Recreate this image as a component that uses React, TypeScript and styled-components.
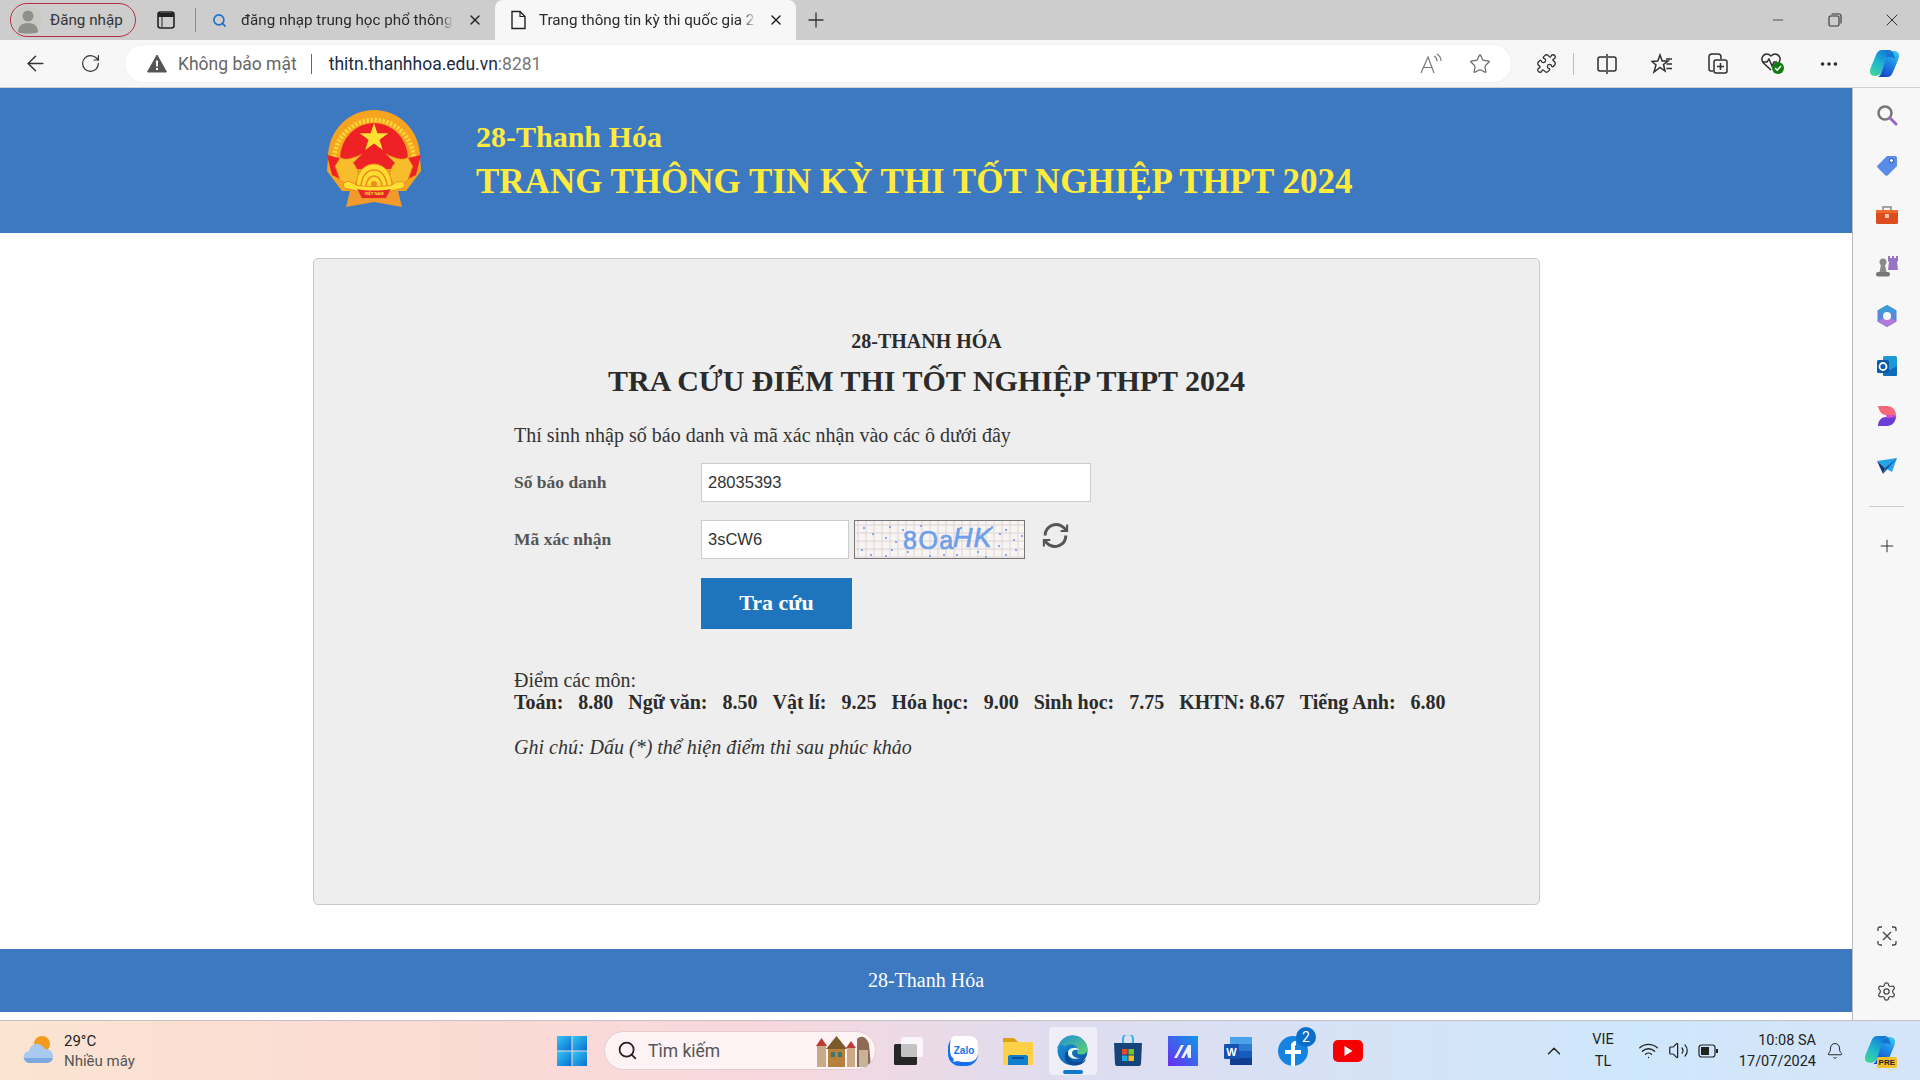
import React from "react";
import styled, { createGlobalStyle } from "styled-components";
import { ArrowLeft, RotateCw, Star, Puzzle, Plus, X, Minus, Search, Settings, MoreHorizontal, Bell, ChevronUp, Wifi, Volume2 } from "lucide-react";

const Global = createGlobalStyle`
  html, body { margin: 0; padding: 0; overflow: hidden; background: #fff; }
  * { box-sizing: border-box; }
`;
const Page = styled.div`
  width: 1920px; height: 1080px; display: flex; flex-direction: column; overflow: hidden;
  font-family: "Liberation Serif", serif; color: #333;
`;
const uiFont = `Roboto, "Noto Sans", sans-serif`;

/* ---------- browser chrome ---------- */
const TabStrip = styled.div`
  height: 40px; background: #cdcdcd; display: flex; align-items: center; flex: none;
  font-family: ${uiFont}; font-size: 15.2px; color: #222;
`;
const SignIn = styled.div`
  margin-left: 10px; width: 126px; height: 34px; border: 1.5px solid #b3303c; border-radius: 17px;
  display: flex; align-items: center; gap: 9px; padding-left: 4px; font-size: 15.2px; color: #333;
`;
const Avatar = styled.svg` width: 26px; height: 28px; flex: none; `;
const TabAction = styled.div` width: 30px; height: 30px; margin-left: 15px; display: flex; align-items: center; justify-content: center; `;
const StripDivider = styled.div` width: 1px; height: 24px; background: #8a8a8a; margin: 0 8px 0 14px; `;
const Tab = styled.div<{ $active?: boolean }>`
  width: ${p => (p.$active ? 301 : 291)}px; height: ${p => (p.$active ? 40 : 34)}px;
  align-self: flex-end; display: flex; align-items: center; gap: ${p => (p.$active ? 12 : 14)}px; padding: 0 12px 0 ${p => (p.$active ? 14 : 8)}px;
  background: ${p => (p.$active ? "#f7f7f7" : "transparent")};
  border-radius: ${p => (p.$active ? "8px 8px 0 0" : "0")};
  margin-bottom: ${p => (p.$active ? 0 : 3)}px;
`;
const TabTitle = styled.span`
  flex: 1; min-width: 0; white-space: nowrap; color: #2a2a2a;
  -webkit-mask-image: linear-gradient(90deg, #000 94%, transparent);
  mask-image: linear-gradient(90deg, #000 94%, transparent);
`;
const NewTab = styled.div` margin-left: 7px; width: 26px; height: 26px; display: flex; align-items: center; justify-content: center; `;
const WindowControls = styled.div` margin-left: auto; display: flex; align-items: center; gap: 37px; padding-right: 18px; `;
const Ctl = styled.div` width: 20px; height: 20px; display: flex; align-items: center; justify-content: center; `;

const Toolbar = styled.div`
  height: 48px; background: #f7f7f7; display: flex; align-items: center; flex: none;
  font-family: ${uiFont}; border-bottom: 1px solid #cfd4da;
`;
const NavBtn = styled.div<{ $ml: number }>` margin-left: ${p => p.$ml}px; width: 26px; height: 26px; display: flex; align-items: center; justify-content: center; `;
const AddressBar = styled.div`
  margin-left: 22px; width: 1386px; height: 37px; background: #fff; border-radius: 18px;
  display: flex; align-items: center; padding-left: 22px; font-size: 18px; box-shadow: 0 0 2px #e2e2e2;
`;
const Insecure = styled.span` color: #666; margin-left: 11px; font-size: 17.5px; `;
const BarDivider = styled.span` width: 1px; height: 20px; background: #666; margin: 0 17px 0 14px; `;
const Host = styled.span` color: #1c2b3f; font-size: 17.5px; `;
const Port = styled.span` color: #777; font-size: 17.5px; `;
const BarEnd = styled.div` margin-left: auto; display: flex; align-items: center; gap: 26px; padding-right: 20px; `;
const TbIcons = styled.div` display: flex; align-items: center; margin-left: 23px; `;
const TbIcon = styled.div<{ $w?: number }>` width: ${p => p.$w ?? 55.5}px; height: 30px; display: flex; align-items: center; justify-content: center; `;
const TbDivider = styled.div` width: 1px; height: 22px; background: #bdbdbd; margin: 0 5px 0 15px; `;

/* ---------- page ---------- */
const BodyRow = styled.div` flex: 1; min-height: 0; display: flex; `;
const Main = styled.main` width: 1852px; display: flex; flex-direction: column; background: #fff; `;
const Header = styled.header`
  height: 145px; background: #3d79c1; display: flex; align-items: flex-start; padding: 21px 0 0 326px; gap: 54px; flex: none;
`;
const HeaderText = styled.div` padding-top: 11px; color: #ffeb3b; font-weight: bold; `;
const HeaderTop = styled.div` font-size: 30px; line-height: 34px; `;
const HeaderMain = styled.div` font-size: 35px; line-height: 42px; margin-top: 7px; white-space: nowrap; `;
const Panel = styled.section`
  margin: 25px 0 0 313px; width: 1227px; height: 647px; background: #eee; border: 1px solid #c8c8c8; border-radius: 5px;
  padding: 70px 0 0 200px; flex: none;
`;
const PanelHead = styled.div` margin-left: -200px; text-align: center; font-weight: bold; color: #2b2b2b; `;
const PanelSub = styled.div` font-size: 20px; line-height: 24px; `;
const PanelTitle = styled.div` font-size: 30px; line-height: 36px; margin-top: 10px; `;
const Intro = styled.p` margin: 23.5px 0 0; font-size: 20px; line-height: 24px; color: #333; `;
const FormRow = styled.div<{ $mt: number }>` display: flex; align-items: center; margin-top: ${p => p.$mt}px; height: 39px; `;
const Label = styled.label` width: 187px; font-weight: bold; font-size: 17.5px; color: #555; flex: none; `;
const Input = styled.input<{ $w: number }>`
  width: ${p => p.$w}px; height: 39px; border: 1px solid #ccc; background: #fff; padding: 0 6px;
  font: 16.5px "Liberation Sans", Arial, sans-serif; color: #333; outline: none;
`;
const Captcha = styled.svg` margin-left: 5px; width: 171px; height: 39px; flex: none; border: 1px solid #777; `;
const Refresh = styled.svg` margin-left: 15px; width: 31px; height: 31px; flex: none; margin-top: -9px; `;
const SubmitBtn = styled.button`
  display: block; margin: 19px 0 0 187px; width: 151px; height: 51px; border: 0; background: #1f75bd; color: #fff;
  padding: 0 0 2px; font: bold 22px "Liberation Serif", serif;
`;
const ScoreTitle = styled.div` margin-top: 40px; font-size: 20px; line-height: 22px; color: #333; `;
const Scores = styled.div` font-size: 20px; line-height: 22px; font-weight: bold; color: #2b2b2b; display: flex; gap: 15px; white-space: nowrap; `;
const Score = styled.span<{ $tight?: boolean }>` display: inline-flex; gap: ${p => (p.$tight ? 5 : 15)}px; `;
const Note = styled.div` margin-top: 23px; font-size: 20px; line-height: 22px; font-style: italic; color: #333; `;
const Footer = styled.footer`
  margin-top: 44px; height: 63px; background: #3d79c1; color: #fff; font-size: 20px;
  display: flex; align-items: center; justify-content: center; flex: none;
`;

const Sidebar = styled.aside`
  width: 68px; background: #f7f7f7; border-left: 1px solid #bcbcbc; display: flex; flex-direction: column; align-items: center;
  padding-top: 2px;
`;
const SideIcon = styled.div` width: 30px; height: 50.2px; display: flex; align-items: center; justify-content: center; flex: none; `;
const SideRule = styled.div` width: 35px; height: 1px; background: #ccc; margin: 14px 0 14px; flex: none; `;
const SideBottom = styled.div` margin-top: auto; display: flex; flex-direction: column; align-items: center; padding-bottom: 3px; gap: 6px; `;

/* ---------- taskbar ---------- */
const Taskbar = styled.div`
  height: 60px; flex: none; display: flex; align-items: center; border-top: 1px solid #c4c0c4;
  background: linear-gradient(90deg, #fbe4d2 0%, #fbdad4 25%, #f8d8de 40%, #dfdcef 55%, #d6e2f6 70%, #cfe7fb 85%, #d6e4f8 100%);
  font-family: ${uiFont}; color: #222;
`;
const Weather = styled.div` margin-left: 22px; width: 42px; height: 34px; flex: none; display: flex; `;
const WeatherText = styled.div` font-size: 15px; line-height: 20px; width: 120px; `;
const WeatherSub = styled.div` color: #555; `;
const WinLogo = styled.svg` margin-left: 373px; width: 30px; height: 30px; flex: none; `;
const SearchBox = styled.div`
  margin-left: 17px; width: 272px; height: 39px; border-radius: 20px; background: #fdf3f5; border: 1px solid #e4ccd3;
  display: flex; align-items: center; padding-left: 12px; gap: 10px; font-size: 17.5px; color: #555; flex: none; position: relative; overflow: hidden;
`;
const TownPic = styled.svg` position: absolute; right: 2px; bottom: 1px; width: 60px; height: 34px; `;
const Apps = styled.div` display: flex; align-items: center; margin-left: 4px; flex: none; `;
const App_ = styled.div<{ $active?: boolean }>`
  width: ${p => (p.$active ? 48 : 55)}px; margin: 0 ${p => (p.$active ? 3.5 : 0)}px; height: 48px;
  display: flex; align-items: center; justify-content: center; position: relative; border-radius: 4px;
  background: ${p => (p.$active ? "rgba(255,255,255,.5)" : "transparent")};
`;
const ActiveBar = styled.div` position: absolute; bottom: 1px; left: 14px; width: 20px; height: 4px; border-radius: 2px; background: #0b78d0; `;
const Badge = styled.div`
  position: absolute; top: 0; right: 4px; width: 20px; height: 20px; border-radius: 50%; background: #0b6ec9; color: #fff;
  font-size: 14px; display: flex; align-items: center; justify-content: center;
`;
const Tray = styled.div` margin-left: auto; display: flex; align-items: center; padding-right: 22px; `;
const Lang = styled.div` width: 50px; margin-left: 13px; text-align: center; font-size: 14.5px; line-height: 22px; `;
const TrayIcons = styled.div` display: flex; align-items: center; gap: 9px; margin-left: 10px; `;
const Clock = styled.div` width: 88px; margin-left: 10px; text-align: right; font-size: 14.5px; line-height: 21px; `;
const BellWrap = styled.div` margin: 0 0 0 10px; width: 18px; display: flex; `;
const CopilotPre = styled.div` margin-left: 20px; width: 34px; height: 34px; position: relative; `;
const PreTag = styled.span`
  position: absolute; right: 1px; bottom: 0; background: #f3c02b; color: #222; font: bold 8px "Liberation Sans", sans-serif;
  padding: 1px 2px; border-radius: 2px;
`;

/* ---------- drawings ---------- */
const Copilot = ({ s = 31, id }: { s?: number; id: string }) => (
  <svg width={s} height={s} viewBox="0 0 31 29">
    <defs>
      <linearGradient id={`${id}a`} x1="0.7" y1="0" x2="0.2" y2="1"><stop offset="0" stopColor="#0f7bd8" /><stop offset=".55" stopColor="#22b8cf" /><stop offset="1" stopColor="#3ed59a" /></linearGradient>
      <linearGradient id={`${id}b`} x1="0.7" y1="0" x2="0.2" y2="1"><stop offset="0" stopColor="#1546c8" /><stop offset=".6" stopColor="#1e8fe6" /><stop offset="1" stopColor="#36c4ee" /></linearGradient>
    </defs>
    <path d="M7 6C8 3 10 1 13 1h9c-2 1-3 3-4 6l-4 13c-1 4-3 6-7 7-3 0-6-1-6-4 0-1 0-3 1-5z" fill={`url(#${id}a)`} />
    <g transform="rotate(180 15.500 14.500)"><path d="M7 6C8 3 10 1 13 1h9c-2 1-3 3-4 6l-4 13c-1 4-3 6-7 7-3 0-6-1-6-4 0-1 0-3 1-5z" fill={`url(#${id}b)`} /></g>
    <path d="M13 1h7c3 0 4 2 5 5l1 4c-2-2-4-2-7-2h-2l1-2c.7-2 1-4 3-5z" fill="#0b5cc4" opacity=".7" />
  </svg>
);

const Emblem = () => (
  <svg width="96" height="99" viewBox="0 0 96 99">
    <path d="M24 82L20 98l28-5 28 5-4-16z" fill="#f39a2d" />
    <path d="M2 48A46 47 0 0 1 94 48L95 62 80 82H16L1 62z" fill="#f6a41f" />
    <path d="M8 52A40 41 0 0 1 88 52" fill="none" stroke="#fdd53c" strokeWidth="4.500" strokeDasharray="2.400 1.600" />
    <path d="M14 50A34 36 0 0 1 82 50V60H14z" fill="#ee2124" />
    <path d="M1 46L26 52 32 64 22 74 6 66z" fill="#ee2124" />
    <path d="M95 46L70 52 64 64 74 74 90 66z" fill="#ee2124" />
    <polygon points="48,14 51.400,24.300 62.300,24.300 53.500,30.700 56.800,41 48,34.600 39.200,41 42.500,30.700 33.700,24.300 44.600,24.300" fill="#fde030" />
    <path d="M14 48c4 3 9 3 22-3l-9 9c3 3 6 8 5 14l-5 11-13-8-5-14c2-3 4-6 5-9z" fill="#f8bd2c" stroke="#e6761f" strokeWidth="1" strokeDasharray="1.600 1.200" />
    <path d="M82 48c-4 3-9 3-22-3l9 9c-3 3-6 8-5 14l5 11 13-8 5-14c-2-3-4-6-5-9z" fill="#f8bd2c" stroke="#e6761f" strokeWidth="1" strokeDasharray="1.600 1.200" />
    <path d="M30 78c0-14 8-23 18-23s18 9 18 23z" fill="#ffdc30" stroke="#f08a1d" strokeWidth="1" />
    <path d="M35 78c0-10 6-17 13-17s13 7 13 17" fill="none" stroke="#f08a1d" strokeWidth="1.500" />
    <path d="M40 78c0-6 3.500-11 8-11s8 5 8 11" fill="none" stroke="#f08a1d" strokeWidth="1.500" />
    <circle cx="48" cy="75" r="3" fill="#f08a1d" />
    <path d="M18 74c3-3 8-1 12 2 6 2 30 2 36 0 4-3 9-5 12-2 2 3-1 6-5 6l-8 2-5 7H36l-5-7-8-2c-4 0-7-3-5-6z" fill="#fde030" stroke="#e6761f" strokeWidth=".7" />
    <path d="M31 80c8 2 26 2 34 0l-5 9H36z" fill="#e8262a" />
    <text x="48" y="86" textAnchor="middle" fontSize="4" fontWeight="bold" fontFamily="Liberation Sans, sans-serif" fill="#fde030">VIỆT NAM</text>
  </svg>
);

const TownIcon = () => (
  <TownPic viewBox="0 0 60 34">
    <rect x="4" y="12" width="9" height="21" fill="#c8a988" /><path d="M3 12l5.500-8 5.500 8z" fill="#bd3b34" />
    <rect x="15" y="14" width="17" height="19" fill="#b8803d" /><path d="M13 15L23.500 2 34 15z" fill="#7a5a2a" />
    <rect x="18" y="18" width="4" height="5" fill="#39786f" /><rect x="25" y="18" width="4" height="5" fill="#39786f" />
    <rect x="34" y="14" width="8" height="19" fill="#cda986" /><path d="M33 14l5-7 5 7z" fill="#bd3b34" />
    <path d="M44 33V5c4-4 9-3 12 5l2 23z" fill="#8f6a52" /><rect x="46" y="16" width="9" height="17" fill="#c9b398" />
  </TownPic>
);

const CaptchaArt = () => {
  const dots = [[8,6],[17,12],[34,5],[36,28],[15,33],[30,34],[52,30],[65,4],[88,33],[105,6],[122,30],[136,5],[150,8],[158,18],[160,28],[150,33],[166,14],[6,28],[47,8],[74,34],[101,33],[130,35],[143,24],[30,16],[40,20],[144,12]];
  const h = Array.from({ length: 5 }, (_, i) => 4 + i * 8);
  const v = Array.from({ length: 22 }, (_, i) => 3 + i * 8);
  return (
    <Captcha viewBox="0 0 169 37">
      <rect width="169" height="37" fill="#f8f4f2" />
      {h.map(y => <line key={y} x1="0" x2="169" y1={y} y2={y} stroke="#dcd6d6" strokeWidth="1" />)}
      {v.map(x => <line key={x} y1="0" y2="37" x1={x} x2={x} stroke="#dcd6d6" strokeWidth="1" />)}
      {dots.map(([x, y]) => <rect key={`${x}-${y}`} x={x} y={y} width="2" height="2" fill="#84a8ec" />)}
      <text x="48" y="28" fontFamily="Liberation Sans, sans-serif" fontSize="25" fill="#6f9fe9" stroke="#6f9fe9" strokeWidth=".7" letterSpacing="1.500">8Oa</text>
      <text x="98" y="26" fontFamily="Liberation Sans, sans-serif" fontSize="27" fontStyle="italic" fill="#6f9fe9" stroke="#6f9fe9" strokeWidth=".6" letterSpacing="1">HK</text>
    </Captcha>
  );
};

const I = { stroke: "#2f2f2f", strokeWidth: 1.5 };

const scores: [string, string][] = [["Toán:", "8.80"], ["Ngữ văn:", "8.50"], ["Vật lí:", "9.25"], ["Hóa học:", "9.00"], ["Sinh học:", "7.75"], ["KHTN:", "8.67"], ["Tiếng Anh:", "6.80"]];

export default function App() {
  return (
    <Page>
      <Global />
      <TabStrip>
        <SignIn>
          <Avatar viewBox="0 0 26 28">
            <rect width="26" height="28" rx="13" fill="#c9c9c5" />
            <circle cx="13" cy="10" r="5.500" fill="#8f8f8b" />
            <path d="M3 26c0-6 4-9 10-9s10 3 10 9c-2 2-18 2-20 0z" fill="#8f8f8b" />
          </Avatar>
          Đăng nhập
        </SignIn>
        <TabAction>
          <svg width="20" height="20" viewBox="0 0 20 20" fill="none"><rect x="2" y="2" width="16" height="16" rx="2.500" stroke="#222" strokeWidth="1.600" /><path d="M2.500 3h15v4h-15z" fill="#222" /><path d="M6 7v10" stroke="#222" strokeWidth="1" /></svg>
        </TabAction>
        <StripDivider />
        <Tab>
          <Search size={15} color="#1a73c9" strokeWidth={2.600} />
          <TabTitle>đăng nhạp trung học phổ thông</TabTitle>
          <X size={16} color="#222" />
        </Tab>
        <Tab $active>
          <svg width="18" height="20" viewBox="0 0 18 20" fill="none"><path d="M3 1.500h8l5 5v12H3z" stroke="#222" strokeWidth="1.400" /><path d="M11 1.500v5h5" stroke="#222" strokeWidth="1.200" /></svg>
          <TabTitle>Trang thông tin kỳ thi quốc gia 2</TabTitle>
          <X size={16} color="#222" />
        </Tab>
        <NewTab><Plus size={24} color="#333" strokeWidth={1.300} /></NewTab>
        <WindowControls>
          <Ctl><Minus size={16} color="#333" strokeWidth={1.200} /></Ctl>
          <Ctl>
            <svg width="14" height="14" viewBox="0 0 14 14" fill="none" stroke="#333" strokeWidth="1.100"><rect x="1" y="3" width="10" height="10" rx="1.500" /><path d="M3.500 1H11c1.100 0 2 .9 2 2v7.500" /></svg>
          </Ctl>
          <Ctl><X size={20} color="#333" strokeWidth={1.200} /></Ctl>
        </WindowControls>
      </TabStrip>

      <Toolbar>
        <NavBtn $ml={22}><ArrowLeft size={25} color="#333" strokeWidth={1.400} /></NavBtn>
        <NavBtn $ml={29}><RotateCw size={21} color="#333" strokeWidth={1.400} /></NavBtn>
        <AddressBar>
          <svg width="20" height="19" viewBox="0 0 20 19"><path d="M10 1L19.500 18H.5z" fill="#555" stroke="#555" strokeLinejoin="round" /><rect x="9" y="6.500" width="2" height="6" fill="#fff" /><rect x="9" y="14" width="2" height="2" fill="#fff" /></svg>
          <Insecure>Không bảo mật</Insecure>
          <BarDivider />
          <Host>thitn.thanhhoa.edu.vn</Host><Port>:8281</Port>
          <BarEnd>
            <svg width="24" height="22" viewBox="0 0 24 22" fill="none" stroke="#777" strokeWidth="1.200"><path d="M2 20L9 4l6 16M4.500 14.500h9" /><path d="M15 3c2 1 3 3 3 5M18 1c3 2 4 4 4 7" /></svg>
            <Star size={22} color="#666" strokeWidth={1.300} />
          </BarEnd>
        </AddressBar>
        <TbIcons>
          <TbIcon $w={24}><Puzzle size={21} {...I} /></TbIcon>
          <TbDivider />
          <TbIcon>
            <svg width="22" height="20" viewBox="0 0 22 20" fill="none" {...I}><path d="M10 3H4a2 2 0 0 0-2 2v10a2 2 0 0 0 2 2h6M12 3h6a2 2 0 0 1 2 2v10a2 2 0 0 1-2 2h-6M11 0v20" /></svg>
          </TbIcon>
          <TbIcon>
            <svg width="22" height="22" viewBox="0 0 22 22" fill="none" {...I}><path d="M9 2l2.200 6H17l-4.500 3.500L14 18 9 14.500 3 19l2-7L1 8.500 6.800 8z" /><path d="M15 6h6M15.500 11h5.500M15.500 15.500h5.500" /></svg>
          </TbIcon>
          <TbIcon>
            <svg width="22" height="24" viewBox="0 0 22 24" fill="none" {...I}><path d="M6 19H4a2 2 0 0 1-2-2V5a3 3 0 0 1 3-3h6a3 3 0 0 1 3 3v2" /><rect x="7" y="8" width="13" height="13" rx="2" /><path d="M13.500 11v7M10 14.500h7" /></svg>
          </TbIcon>
          <TbIcon>
            <svg width="26" height="24" viewBox="0 0 26 24" fill="none" {...I}><path d="M11 18L3.500 11C0 7 3 2 7 2c2 0 3 1 4 2 1-1 2-2 4-2 4 0 7 5 3.500 9" /><path d="M2 10h5l2-3 3 7 2-4h3" /><circle cx="18" cy="16" r="6" fill="#107c10" stroke="none" /><path d="M15 16l2.200 2.200L21 14" stroke="#fff" strokeWidth="1.600" /></svg>
          </TbIcon>
          <TbIcon><MoreHorizontal size={22} {...I} strokeWidth={2} /></TbIcon>
          <TbIcon><Copilot id="cp1" /></TbIcon>
        </TbIcons>
      </Toolbar>

      <BodyRow>
        <Main>
          <Header>
            <Emblem />
            <HeaderText>
              <HeaderTop>28-Thanh Hóa</HeaderTop>
              <HeaderMain>TRANG THÔNG TIN KỲ THI TỐT NGHIỆP THPT 2024</HeaderMain>
            </HeaderText>
          </Header>
          <Panel>
            <PanelHead>
              <PanelSub>28-THANH HÓA</PanelSub>
              <PanelTitle>TRA CỨU ĐIỂM THI TỐT NGHIỆP THPT 2024</PanelTitle>
            </PanelHead>
            <Intro>Thí sinh nhập số báo danh và mã xác nhận vào các ô dưới đây</Intro>
            <FormRow $mt={16.5}>
              <Label>Số báo danh</Label>
              <Input $w={390} defaultValue="28035393" />
            </FormRow>
            <FormRow $mt={18}>
              <Label>Mã xác nhận</Label>
              <Input $w={148} defaultValue="3sCW6" />
              <CaptchaArt />
              <Refresh viewBox="0 0 24 24" fill="none" stroke="#555" strokeWidth="2.300">
                <path d="M4 12a8.500 8.500 0 0 1 14.500-6L21 8.500M20 12a8.500 8.500 0 0 1-14.500 6L3 15.500" />
                <path d="M21 3.500v5h-5M3 20.500v-5h5" strokeWidth="1.600" />
              </Refresh>
            </FormRow>
            <SubmitBtn type="button">Tra cứu</SubmitBtn>
            <ScoreTitle>Điểm các môn:</ScoreTitle>
            <Scores>
              {scores.map(([k, v]) => <Score key={k} $tight={k === "KHTN:"}><span>{k}</span><span>{v}</span></Score>)}
            </Scores>
            <Note>Ghi chú: Dấu (*) thể hiện điểm thi sau phúc khảo</Note>
          </Panel>
          <Footer>28-Thanh Hóa</Footer>
        </Main>
        <Sidebar>
          <SideIcon>
            <svg width="22" height="22" viewBox="0 0 22 22" fill="none"><circle cx="9" cy="9" r="6.500" stroke="#777" strokeWidth="2.500" /><path d="M14 14l6 6" stroke="#9a68c8" strokeWidth="3" strokeLinecap="round" /></svg>
          </SideIcon>
          <SideIcon>
            <svg width="22" height="22" viewBox="0 0 22 22"><path d="M11 2h8a2 2 0 0 1 2 2v8l-9 9a2 2 0 0 1-3 0l-7-7a2 2 0 0 1 0-3z" fill="#5a8be6" /><circle cx="15.500" cy="6.500" r="2" fill="#fff" stroke="#2c4ea8" /></svg>
          </SideIcon>
          <SideIcon>
            <svg width="24" height="20" viewBox="0 0 24 20"><path d="M8 5V2h8v3" fill="none" stroke="#8a8a8a" strokeWidth="1.500" /><rect x="1" y="5" width="22" height="14" rx="1.500" fill="#dc4e1e" /><rect x="1" y="5" width="22" height="3" fill="#ef6a2d" /><rect x="10" y="9" width="4" height="4" fill="#f0c8a8" /></svg>
          </SideIcon>
          <SideIcon>
            <svg width="24" height="24" viewBox="0 0 24 24"><path d="M13 2h2v2h2V2h2v2h2V2h2v5l-1 1 1 8h-10l1-8-1-1z" fill="#9a72c4" /><circle cx="8" cy="8" r="3.500" fill="#8a8a8a" /><path d="M6 11h4l1.500 7h-7z" fill="#8a8a8a" /><rect x="1" y="18" width="14" height="4.500" rx="2" fill="#777" /></svg>
          </SideIcon>
          <SideIcon>
            <svg width="22" height="24" viewBox="0 0 22 24"><path d="M11 1l9.500 5.500v11L11 23l-9.500-5.500v-11z" fill="#5a86d8" /><path d="M11 1l9.500 5.500-6 3.500C12 8 9 8 7 10L1.500 6.500z" fill="#3d9bd8" /><path d="M1.500 17.500l6-3.500c2 2 5 2 7 0l6 3.500L11 23z" fill="#b07ad8" /><circle cx="11" cy="12" r="4" fill="#f7f7f7" /></svg>
          </SideIcon>
          <SideIcon>
            <svg width="22" height="22" viewBox="0 0 22 22"><rect x="7" y="1" width="14" height="18" rx="1.500" fill="#1d9ad6" /><path d="M7 11l7 4 7-4v9a1 1 0 0 1-1 1H8a1 1 0 0 1-1-1z" fill="#0f6cbd" /><rect x="1" y="5" width="12" height="13" rx="1.500" fill="#0a5ba8" /><circle cx="7" cy="11.500" r="3.500" fill="none" stroke="#fff" strokeWidth="1.800" /></svg>
          </SideIcon>
          <SideIcon>
            <svg width="20" height="22" viewBox="0 0 20 22"><path d="M1 1h9c5 0 9 4 9 9H8C5 10 2 6 1 1z" fill="#f5687a" /><path d="M19 11c0 6-4 10-9 10H1c0-5 3-9 8-9 4 0 7-1 10-1z" fill="#6c3ed8" /><path d="M9 10h10c0 2-4 3-9 3z" fill="#d24bc8" /></svg>
          </SideIcon>
          <SideIcon>
            <svg width="22" height="18" viewBox="0 0 22 18"><path d="M1 4L21 1 16 15 9 11z" fill="#27a4ea" /><path d="M9 11l12-10L7 17z" fill="#0f5ea8" /><path d="M1 4l8 7-2 6z" fill="#123b74" /></svg>
          </SideIcon>
          <SideRule />
          <SideIcon><Plus size={20} color="#333" strokeWidth={1.200} /></SideIcon>
          <SideBottom>
            <SideIcon>
              <svg width="20" height="20" viewBox="0 0 20 20" fill="none" stroke="#444" strokeWidth="1.300"><path d="M1 5V3a2 2 0 0 1 2-2h2M15 1h2a2 2 0 0 1 2 2v2M19 15v2a2 2 0 0 1-2 2h-2M5 19H3a2 2 0 0 1-2-2v-2" /><path d="M6 6l8 8M14 6l-8 8" /></svg>
            </SideIcon>
            <SideIcon><Settings size={21} color="#444" strokeWidth={1.400} /></SideIcon>
          </SideBottom>
        </Sidebar>
      </BodyRow>

      <Taskbar>
        <Weather>
          <svg width="34" height="32" viewBox="0 0 34 32"><circle cx="20" cy="10" r="8" fill="#f39a1e" /><path d="M8 29a6 6 0 0 1-1-12c1-5 5-8 10-7 3 1 5 3 6 5 5 0 8 3 8 7s-3 7-7 7z" fill="#a9c9f0" /><path d="M8 29a6 6 0 0 1-6-5h29c-1 3-3 5-7 5z" fill="#7ea9e0" /></svg>
        </Weather>
        <WeatherText>29°C<WeatherSub>Nhiều mây</WeatherSub></WeatherText>
        <WinLogo viewBox="0 0 30 30">
          <defs><linearGradient id="wl" x1="0" y1="0" x2="1" y2="1"><stop offset="0" stopColor="#35c5f8" /><stop offset="1" stopColor="#0a6fd0" /></linearGradient></defs>
          <rect width="14.500" height="14.500" fill="url(#wl)" /><rect x="15.500" width="14.500" height="14.500" fill="url(#wl)" />
          <rect y="15.500" width="14.500" height="14.500" fill="url(#wl)" /><rect x="15.500" y="15.500" width="14.500" height="14.500" fill="url(#wl)" />
        </WinLogo>
        <SearchBox>
          <Search size={21} color="#222" strokeWidth={2} />
          Tìm kiếm
          <TownIcon />
        </SearchBox>
        <Apps>
          <App_>
            <svg width="30" height="30" viewBox="0 0 30 30"><rect x="1" y="8" width="23" height="21" rx="1.500" fill="#262626" /><rect x="8" y="1" width="22" height="20" rx="1.500" fill="#fff" opacity=".72" /></svg>
          </App_>
          <App_>
            <svg width="32" height="32" viewBox="0 0 32 32"><rect x="1" y="1" width="30" height="30" rx="12" fill="#1570ef" /><path d="M7 1h15c5 0 9 3 9 9v8c0 5-4 9-9 9-6 0-9 0-12-1-1 0-3 1-4 1 1-2 1-3 0-4C3 21 3 16 3 12 3 6 4 3 7 1z" fill="#fff" /><text x="17" y="19" textAnchor="middle" fontSize="10" fontFamily="Liberation Sans, sans-serif" fontWeight="bold" fill="#1570ef">Zalo</text></svg>
          </App_>
          <App_>
            <svg width="30" height="28" viewBox="0 0 30 28"><path d="M0 1h11l4 4h15v22H0z" fill="#dba314" /><rect y="5" width="30" height="23" fill="#ffd04a" /><path d="M5 28v-8c0-1 1-2 2-2h16c1 0 2 1 2 2v8z" fill="#0f7fd0" /><rect x="9" y="20" width="12" height="2" fill="#0a4f9c" /></svg>
          </App_>
          <App_ $active>
            <svg width="31" height="31" viewBox="0 0 31 31"><defs><linearGradient id="ed" x1="0" y1="0" x2="1" y2="1"><stop offset="0" stopColor="#1e8ed8" /><stop offset="1" stopColor="#5fd46e" /></linearGradient><linearGradient id="ed2" x1="0" y1="0" x2="1" y2="1"><stop offset="0" stopColor="#1a9ae0" /><stop offset="1" stopColor="#0c4fa0" /></linearGradient></defs><circle cx="15.500" cy="15.500" r="15" fill="url(#ed2)" /><path d="M1 13C3 5 9 .5 16 .5c8 0 14 6 14.500 13 .2 3-2 6-6 6-3 0-4-1-4.500-2 1-1 1-4-1-6-3-3-8-3-11 0-3-3-7-2-8 1.500z" fill="url(#ed)" /><path d="M11 16c-1 5 2 11 10 11 3 0 6-1 8-3-2 5-7 6.500-12 6.500C11 30 7 25 8 19c.5-2 2-3 3-3z" fill="#0b4a96" /><path d="M12 15c3-3 8-3 10 0-4-1-7 0-7 3 0 3 3 5 8 5-5 2-12 0-12-5 0-1 0-2 1-3z" fill="#f0fbff" /></svg>
            <ActiveBar />
          </App_>
          <App_>
            <svg width="30" height="32" viewBox="0 0 30 32"><path d="M10 8V4a5 5 0 0 1 10 0v4" fill="none" stroke="#33b0e8" strokeWidth="2" /><path d="M1 8h28l-1 21a2 2 0 0 1-2 2H4a2 2 0 0 1-2-2z" fill="#16447a" /><rect x="9" y="14" width="5.500" height="5.500" fill="#e8492e" /><rect x="15.500" y="14" width="5.500" height="5.500" fill="#78c22a" /><rect x="9" y="20.500" width="5.500" height="5.500" fill="#1fa5ea" /><rect x="15.500" y="20.500" width="5.500" height="5.500" fill="#fbbc1a" /></svg>
          </App_>
          <App_>
            <svg width="30" height="30" viewBox="0 0 30 30"><defs><linearGradient id="mm" x1="0" y1="1" x2="1" y2="0"><stop offset="0" stopColor="#6a2cf0" /><stop offset="1" stopColor="#1098e8" /></linearGradient></defs><rect width="30" height="30" fill="url(#mm)" /><path d="M6 22l7-13h3l-7 13zM13 22l7-13h3v13h-3l-1-5-3 5z" fill="#fff" opacity=".9" /></svg>
          </App_>
          <App_>
            <svg width="30" height="30" viewBox="0 0 30 30"><rect x="7" y="1" width="22" height="7" fill="#4aa3ea" /><rect x="7" y="8" width="22" height="7" fill="#2b7cd3" /><rect x="7" y="15" width="22" height="7" fill="#185abd" /><rect x="7" y="22" width="22" height="7" fill="#103f91" /><rect x="1" y="8" width="15" height="15" rx="1" fill="#1650b0" /><text x="8.500" y="20" textAnchor="middle" fontSize="11" fontFamily="Liberation Sans, sans-serif" fontWeight="bold" fill="#fff">W</text></svg>
          </App_>
          <App_>
            <svg width="30" height="30" viewBox="0 0 30 30"><circle cx="15" cy="15" r="15" fill="#1583e0" /><path d="M13 30V18H7v-4h6v-4c0-3 2-5 5-5v4c-1 0-1 1-1 2v3h6v4h-6v12z" fill="#fff" /></svg>
            <Badge>2</Badge>
          </App_>
          <App_>
            <svg width="30" height="22" viewBox="0 0 30 22"><rect width="30" height="22" rx="5" fill="#f70000" /><path d="M11.500 6l8 5-8 5z" fill="#fff" /></svg>
          </App_>
        </Apps>
        <Tray>
          <ChevronUp size={22} color="#222" strokeWidth={1.500} />
          <Lang>VIE<br />TL</Lang>
          <TrayIcons>
            <Wifi size={21} color="#222" strokeWidth={1.500} />
            <Volume2 size={21} color="#222" strokeWidth={1.400} />
            <svg width="20" height="14" viewBox="0 0 20 14" fill="none"><rect x="1" y="1" width="16" height="12" rx="2.500" stroke="#222" strokeWidth="1.200" /><rect x="3" y="3" width="8" height="8" fill="#222" /><rect x="18" y="5" width="2" height="4" fill="#222" /></svg>
          </TrayIcons>
          <Clock>10:08 SA<br />17/07/2024</Clock>
          <BellWrap><Bell size={18} color="#222" strokeWidth={1.300} /></BellWrap>
          <CopilotPre><Copilot s={32} id="cp2" /><PreTag>PRE</PreTag></CopilotPre>
        </Tray>
      </Taskbar>
    </Page>
  );
}
